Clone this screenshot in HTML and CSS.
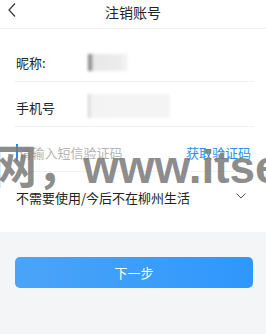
FILE: index.html
```html
<!DOCTYPE html>
<html lang="zh-CN">
<head>
<meta charset="utf-8">
<link rel="stylesheet" href="styles.css">
</head>
<body>
<div class="page">
  <header class="header">
    <svg class="back" width="10" height="16" viewBox="0 0 10 16"><path d="M8 1.5 L2 8 L8 14.5" fill="none" stroke="#333" stroke-width="1.2"/></svg>
    <div class="title">注销账号</div>
    <span></span>
  </header>
  <section class="form">
    <div class="row">
      <span class="label">昵称:</span>
      <span class="value"><span class="mask mask-name"></span></span>
    </div>
    <div class="row">
      <span class="label">手机号</span>
      <span class="value"><span class="mask mask-phone"></span></span>
    </div>
    <div class="row">
      <span class="cursor"></span>
      <span class="placeholder">请输入短信验证码</span>
      <span class="code">获取验证码</span>
    </div>
    <div class="row last">
      <span class="reason">不需要使用/今后不在柳州生活</span>
      <svg class="down" width="10" height="6" viewBox="0 0 10 6"><path d="M0.5 0.5 L5 5 L9.5 0.5" fill="none" stroke="#555" stroke-width="1"/></svg>
    </div>
  </section>
  <div class="actions">
    <button class="next">下一步</button>
  </div>
  <div class="watermark">网，www.itse</div>
</div>
</body>
</html>
```
FILE: styles.css
```css
* { box-sizing: border-box; }
html, body { margin: 0; padding: 0; }
body {
  width: 266px;
  height: 334px;
  overflow: hidden;
  background: #f4f5f7;
  font-family: "Noto Sans CJK SC", "Noto Sans", sans-serif;
  color: #222;
}
.page { position: relative; width: 266px; height: 334px; overflow: hidden; }
.header {
  height: 29px;
  background: #fff;
  border-bottom: 1px solid #f0f0f0;
  display: grid;
  grid-template-columns: 40px 1fr 40px;
  align-items: center;
}
.back { margin-left: 7px; margin-top: -8px; }
.title {
  text-align: center;
  font-size: 14px;
  color: #222;
  margin-top: -5px;
}
.form {
  background: #fff;
  padding: 8px 12px 15px 14px;
}
.row {
  height: 45px;
  display: flex;
  align-items: center;
  padding-top: 6px;
  border-bottom: 1px solid #f0f0f0;
  font-size: 13px;
  padding-left: 2px;
}
.row.last { border-bottom: none; }
.label { width: 72px; color: #222; }
.value { flex: 1; display: flex; align-items: center; }
.mask { display: block; filter: blur(1.5px); }
.mask-name {
  width: 40px; height: 17px;
  background: linear-gradient(90deg, #8a8a8a 0, #8a8a8a 3px, #e8e8e8 5px, #ececec 80%, #f6f6f6 100%);
}
.mask-phone {
  width: 82px; height: 24px;
  background: linear-gradient(90deg, #cfcfcf 0, #cfcfcf 1px, #f3f3f3 3px, #f4f4f4 100%);
  margin-top: -2px;
}
.cursor {
  width: 1.5px; height: 17px; background: #2d8cf0; margin-right: 1px;
}
.placeholder { flex: 1; color: #b4b4b4; }
.code { color: #2b8ff1; margin-right: 3px; }
.reason { flex: 1; color: #222; }
.down { margin-right: 8px; margin-top: -4px; }
.actions { padding: 25px 13px 0 15px; }
.next {
  display: block;
  width: 238px;
  height: 31px;
  border: none;
  border-radius: 5px;
  background: linear-gradient(90deg, #4ba4f8, #2f97fc);
  color: #fff;
  font-family: "Noto Sans CJK SC", sans-serif;
  font-size: 13px;
  padding: 0;
}
.watermark {
  position: absolute;
  left: -9px;
  top: 137px;
  font-family: "Liberation Sans", "Noto Sans CJK SC", sans-serif;
  font-weight: bold;
  font-size: 46px;
  line-height: 60px;
  color: rgba(120, 120, 120, 0.85);
  white-space: nowrap;
  pointer-events: none;
}
```
